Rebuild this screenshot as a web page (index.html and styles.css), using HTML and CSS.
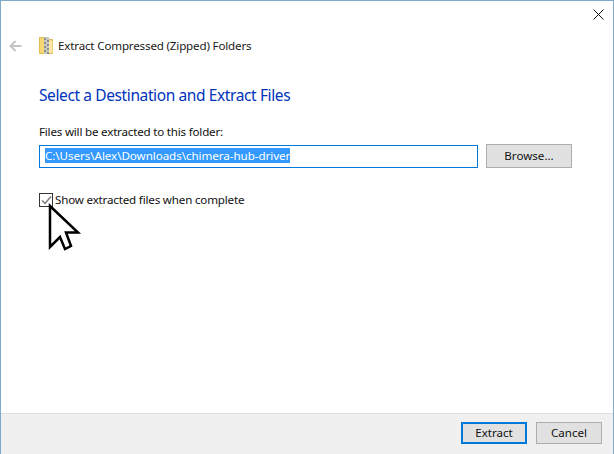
FILE: index.html
```html
<!DOCTYPE html>
<html lang="en">
<head>
<meta charset="utf-8">
<title>Extract Compressed (Zipped) Folders</title>
<link rel="stylesheet" href="styles.css">
</head>
<body>
<div class="window">
  <div class="close-row">
    <svg class="close" width="11" height="11" viewBox="0 0 11 11"><path d="M.5.5l10 10M10.5.5l-10 10" stroke="#111" stroke-width="1" fill="none"/></svg>
  </div>
  <div class="nav">
    <svg class="back" width="14" height="12" viewBox="0 0 14 12"><path d="M12.500 6H2M6.500 1 1.500 6l5 5" stroke="#c4c4c4" stroke-width="2" fill="none"/></svg>
    <svg class="zip" width="14" height="17" viewBox="0 0 14 17">
      <path d="M.5.5h9v2h4v14H.5z" fill="#f8d775" stroke="#e0b94f"/>
      <path d="M10 4h3.500v12H10z" fill="#fbe7a6"/>
      <rect x="5" y="0" width="5" height="17" fill="#c9c9c4"/>
      <path d="M5 2h2M8 4h2M5 6h2M8 8h2M5 10h2M8 12h2M5 14h2M8 16h2" stroke="#55554f" stroke-width="1"/>
    </svg>
    <span class="nav-title">Extract Compressed (Zipped) Folders</span>
  </div>
  <main class="content">
    <h1 class="heading">Select a Destination and Extract Files</h1>
    <p class="label">Files will be extracted to this folder:</p>
    <div class="path-row">
      <div class="path-input"><span class="selected">C:\Users\Alex\Downloads\chimera-hub-driver</span></div>
      <button class="btn browse">Browse...</button>
    </div>
    <div class="check-row">
      <span class="checkbox">
        <svg width="11" height="11" viewBox="0 0 11 11"><path d="M1 5.500l3 3 6-7" stroke="#7a7a7a" stroke-width="1.500" fill="none"/></svg>
      </span>
      <span class="check-label">Show extracted files when complete</span>
    </div>
  </main>
  <footer class="footer">
    <button class="btn primary">Extract</button>
    <button class="btn">Cancel</button>
  </footer>
  <svg class="cursor" width="36" height="52" viewBox="0 0 36 52"><path d="M4 4V45L14 35l5 12 6-3-5-13.500H32z" fill="#fff" stroke="#000" stroke-width="2.500" stroke-linejoin="miter"/></svg>
</div>
</body>
</html>
```
FILE: styles.css
```css
* { box-sizing: border-box; }
html, body { margin: 0; padding: 0; }
body { width: 614px; height: 454px; overflow: hidden; background: #fff; font-family: "Noto Sans", "Open Sans", sans-serif; font-size: 12px; color: #1a1a1a; }
.window { position: relative; width: 614px; height: 454px; border: 1px solid #7eaac8; border-bottom: 0; display: flex; flex-direction: column; background: #fff; }
.close-row { height: 9px; display: flex; justify-content: flex-end; padding: 8px 9px 0 0; }
.close { display: block; flex: none; }
.nav { display: flex; align-items: center; height: 17px; margin-top: 27px; padding-left: 8px; }
.back { margin-right: 16px; flex: none; }
.zip { margin-right: 5px; flex: none; }
.nav-title { font-size: 11.6px; line-height: 17px; white-space: nowrap; letter-spacing: -0.17px; }
.content { flex: 1; padding: 0 0 0 38px; }
.heading { margin: 31px 0 0; font-size: 15.5px; line-height: 21px; font-weight: 400; color: #0033bc; white-space: nowrap; letter-spacing: -0.39px; }
.label { margin: 18px 0 0; font-size: 11.6px; line-height: 16px; color: #111; letter-spacing: -0.2px; }
.path-row { display: flex; align-items: center; margin-top: 4px; }
.path-input { width: 439px; height: 23px; border: 1px solid #0078d7; padding: 2px 0 0 5px; line-height: 15px; font-size: 11.6px; white-space: nowrap; letter-spacing: -0.05px; }
.selected { display: inline-block; height: 15px; background: #3399ff; color: #fff; }
.btn { height: 24px; width: 86px; padding: 0 0 2px; border: 1px solid #adadad; background: #e1e1e1; font: inherit; font-size: 11.6px; color: #111; }
.browse { margin-left: 8px; }
.check-row { display: flex; align-items: center; margin-top: 24px; height: 16px; }
.checkbox { width: 14px; height: 14px; border: 1px solid #333; display: flex; align-items: center; justify-content: center; flex: none; background: #fff; }
.check-label { margin-left: 2px; font-size: 11.6px; line-height: 16px; color: #111; white-space: nowrap; letter-spacing: -0.18px; }
.footer { height: 41px; background: #f0f0f0; border-top: 1px solid #dfdfdf; display: flex; justify-content: flex-end; gap: 9px; padding: 8px 11px 0 0; flex: none; }
.footer .btn { width: 66px; height: 22px; }
.footer .primary { border: 2px solid #0078d7; }
.cursor { position: absolute; left: 45px; top: 201px; }
```
